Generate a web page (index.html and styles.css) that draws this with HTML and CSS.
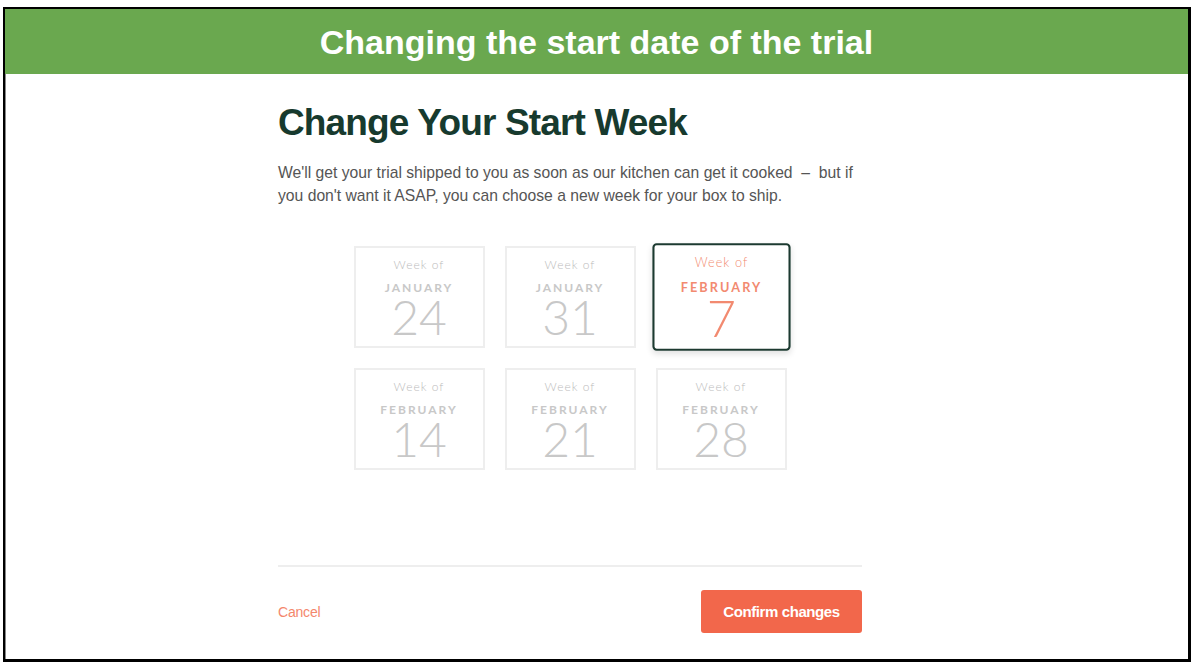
FILE: index.html
```html
<!DOCTYPE html>
<html>
<head>
    <title>Change Your Start Week</title>
    <link rel="stylesheet" href="styles.css">
</head>
<body>
    <div class="frame">
        <div class="banner">Changing the start date of the trial</div>

        <div class="content">
            <h1>Change Your Start Week</h1>
            <p class="intro">
                We'll get your trial shipped to you as soon as our kitchen can get it cooked &nbsp;&ndash;&nbsp; but if<br>
                you don't want it ASAP, you can choose a new week for your box to ship.
            </p>

            <div class="weeks">
                <div class="week">
                    <div class="week-label">Week of</div>
                    <div class="week-month">January</div>
                    <div class="week-day">24</div>
                </div>
                <div class="week">
                    <div class="week-label">Week of</div>
                    <div class="week-month">January</div>
                    <div class="week-day">31</div>
                </div>
                <div class="week selected">
                    <div class="week-label">Week of</div>
                    <div class="week-month">February</div>
                    <div class="week-day">7</div>
                </div>
                <div class="week">
                    <div class="week-label">Week of</div>
                    <div class="week-month">February</div>
                    <div class="week-day">14</div>
                </div>
                <div class="week">
                    <div class="week-label">Week of</div>
                    <div class="week-month">February</div>
                    <div class="week-day">21</div>
                </div>
                <div class="week">
                    <div class="week-label">Week of</div>
                    <div class="week-month">February</div>
                    <div class="week-day">28</div>
                </div>
            </div>

            <div class="actions">
                <a class="cancel" href="#">Cancel</a>
                <button class="confirm" type="button">Confirm changes</button>
            </div>
        </div>
    </div>
</body>
</html>
```

FILE: styles.css
```css
body {
    margin: 0;
    background: #FFFFFF;
    font-family: 'Liberation Sans', Arial, sans-serif;
}

.frame {
    box-sizing: border-box;
    width: 1188px;
    height: 655px;
    margin: 7px 0 0 3px;
    border: 2px solid #000000;
    border-right-width: 3px;
    border-bottom-width: 3px;
    box-shadow: inset 1px 1px 0 #888888;
    background: #FFFFFF;
}

.banner {
    height: 65px;
    background-color: #6AA84F;
    color: #FFFFFF;
    font-size: 34px;
    font-weight: bold;
    line-height: 66px;
    text-align: center;
}

.content {
    width: 584px;
    margin-left: 273px;
}

h1 {
    margin: 27px 0 0;
    font-family: 'Liberation Sans', Arial, sans-serif;
    font-size: 37px;
    font-weight: bold;
    letter-spacing: -0.85px;
    line-height: 44px;
    color: #173A2E;
}

.intro {
    margin: 16px 0 0;
    font-size: 15.7px;
    line-height: 23px;
    color: #555555;
    white-space: nowrap;
}

.weeks {
    display: grid;
    grid-template-columns: repeat(3, 131px);
    grid-auto-rows: 102px;
    gap: 20px;
    justify-content: center;
    margin-top: 39px;
}

.week {
    box-sizing: border-box;
    padding-top: 9px;
    border: 2px solid #EEEEEE;
    text-align: center;
    color: #C4C4C4;
    font-family: Lato, 'Open Sans', sans-serif;
    cursor: pointer;
}

.week-label {
    font-size: 12px;
    line-height: 16px;
    letter-spacing: 1px;
    font-weight: 300;
    color: #BBBBBB;
}

.week-month {
    margin-top: 8px;
    font-size: 12px;
    line-height: 14px;
    font-weight: bold;
    letter-spacing: 2px;
    text-transform: uppercase;
    color: #C8C8C8;
}

.week-day {
    font-size: 48px;
    line-height: 44px;
    font-weight: 300;
    color: #C8C8C8;
}

.week.selected {
    border-color: #1C3A30;
    border-radius: 4px;
    transform: scale(1.055);
    box-shadow: 0 3px 6px rgba(0, 0, 0, 0.12);
}

.week.selected .week-label,
.week.selected .week-month,
.week.selected .week-day {
    color: #F28A70;
}

.actions {
    display: flex;
    justify-content: space-between;
    align-items: center;
    margin-top: 95px;
    padding-top: 23px;
    border-top: 2px solid #EEEEEE;
}

.cancel {
    font-size: 14px;
    color: #F4876C;
    text-decoration: none;
    letter-spacing: -0.2px;
}

.confirm {
    width: 161px;
    height: 43px;
    border: none;
    border-radius: 3px;
    background-color: #F2674B;
    color: #FFFFFF;
    font-family: 'Liberation Sans', Arial, sans-serif;
    font-size: 15px;
    font-weight: bold;
    letter-spacing: -0.4px;
    cursor: pointer;
}
```
